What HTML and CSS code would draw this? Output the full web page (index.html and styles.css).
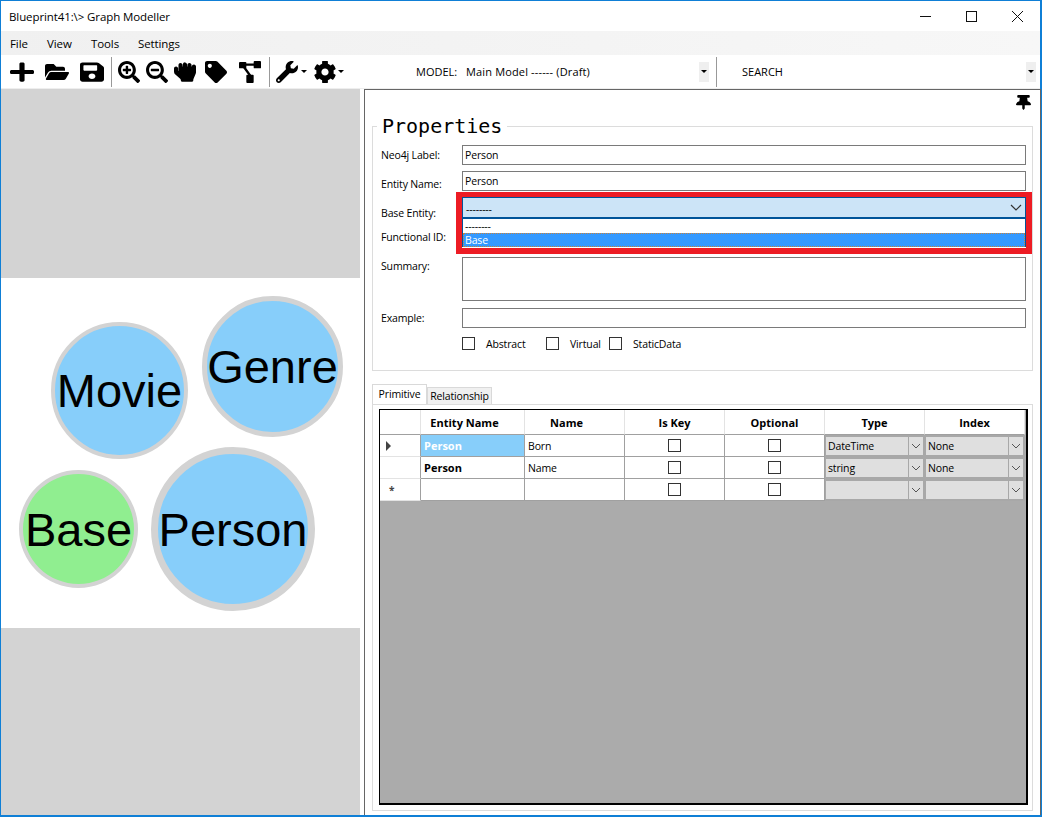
FILE: index.html
```html
<!DOCTYPE html>
<html lang="en">
<head>
<meta charset="utf-8">
<title>Blueprint41 Graph Modeller</title>
<link rel="stylesheet" href="styles.css">
</head>
<body>
<div class="window">
  <header class="titlebar">
    <span class="title">Blueprint41:\&gt; Graph Modeller</span>
    <div class="winctl">
      <svg class="winbtn" viewBox="0 0 46 30"><path d="M18 15.5h11" stroke="#111" fill="none"/></svg>
      <svg class="winbtn" viewBox="0 0 46 30"><rect x="18.5" y="10.5" width="10" height="10" stroke="#111" fill="none"/></svg>
      <svg class="winbtn" viewBox="0 0 46 30"><path d="M18 10l11 11M29 10L18 21" stroke="#111" fill="none"/></svg>
    </div>
  </header>
  <nav class="menubar">
    <span class="menu-file">File</span><span class="menu-view">View</span><span class="menu-tools">Tools</span><span>Settings</span>
  </nav>
  <div class="toolbar">
    <div class="tools">
      <svg class="ico" viewBox="0 0 448 512" preserveAspectRatio="none"><path d="M416 208H272V64c0-17.67-14.33-32-32-32h-32c-17.67 0-32 14.33-32 32v144H32c-17.67 0-32 14.33-32 32v32c0 17.67 14.33 32 32 32h144v144c0 17.67 14.33 32 32 32h32c17.67 0 32-14.33 32-32V304h144c17.67 0 32-14.33 32-32v-32c0-17.67-14.33-32-32-32z"/></svg>
      <svg class="ico" viewBox="0 0 576 512"><path d="M572.694 292.093L500.27 416.248A63.997 63.997 0 0 1 444.989 448H45.025c-18.523 0-30.064-20.093-20.731-36.093l72.424-124.155A64 64 0 0 1 152 256h399.964c18.523 0 30.064 20.093 20.73 36.093zM152 224h328v-48c0-26.51-21.49-48-48-48H272l-64-64H48C21.49 64 0 85.49 0 112v278.046l69.077-118.418C86.214 242.25 117.989 224 152 224z"/></svg>
      <svg class="ico" viewBox="0 0 448 512" preserveAspectRatio="none"><path d="M433.941 129.941l-83.882-83.882A48 48 0 0 0 316.118 32H48C21.49 32 0 53.49 0 80v352c0 26.51 21.49 48 48 48h352c26.51 0 48-21.49 48-48V163.882a48 48 0 0 0-14.059-33.941zM224 416c-35.346 0-64-28.654-64-64 0-35.346 28.654-64 64-64s64 28.654 64 64c0 35.346-28.654 64-64 64zm96-304.52V212c0 6.627-5.373 12-12 12H76c-6.627 0-12-5.373-12-12V108c0-6.627 5.373-12 12-12h228.52c3.183 0 6.235 1.264 8.485 3.515l3.48 3.48A11.996 11.996 0 0 1 320 111.48z"/></svg>
      <span class="sep"></span>
      <svg class="ico" viewBox="0 0 512 512"><path d="M304 192v32c0 6.6-5.4 12-12 12h-56v56c0 6.6-5.4 12-12 12h-32c-6.6 0-12-5.4-12-12v-56h-56c-6.6 0-12-5.4-12-12v-32c0-6.6 5.4-12 12-12h56v-56c0-6.6 5.4-12 12-12h32c6.6 0 12 5.4 12 12v56h56c6.6 0 12 5.4 12 12zm201 284.7L476.7 505c-9.4 9.4-24.6 9.4-33.9 0L343 405.3c-4.5-4.5-7-10.6-7-17V372c-35.3 27.6-79.7 44-128 44C93.1 416 0 322.9 0 208S93.1 0 208 0s208 93.1 208 208c0 48.3-16.4 92.7-44 128h16.3c6.4 0 12.5 2.5 17 7l99.7 99.7c9.3 9.4 9.3 24.6 0 34zM344 208c0-75.2-60.8-136-136-136S72 132.8 72 208s60.8 136 136 136 136-60.8 136-136z"/></svg>
      <svg class="ico" viewBox="0 0 512 512"><path d="M304 192v32c0 6.6-5.4 12-12 12H124c-6.6 0-12-5.4-12-12v-32c0-6.6 5.4-12 12-12h168c6.6 0 12 5.4 12 12zm201 284.7L476.7 505c-9.4 9.4-24.6 9.4-33.9 0L343 405.3c-4.5-4.5-7-10.6-7-17V372c-35.3 27.6-79.7 44-128 44C93.1 416 0 322.9 0 208S93.1 0 208 0s208 93.1 208 208c0 48.3-16.4 92.7-44 128h16.3c6.4 0 12.5 2.5 17 7l99.7 99.7c9.3 9.4 9.3 24.6 0 34zM344 208c0-75.2-60.8-136-136-136S72 132.8 72 208s60.8 136 136 136 136-60.8 136-136z"/></svg>
      <svg class="ico" viewBox="0 0 512 512"><path d="M464.8 80c-26.9-.4-48.8 21.2-48.8 48h-8V96.8c0-26.3-20.9-48.3-47.2-48.8-26.9-.4-48.8 21.2-48.8 48v32h-8V80.8c0-26.3-20.9-48.3-47.2-48.8-26.9-.4-48.8 21.2-48.8 48v48h-8V96.8c0-26.3-20.9-48.3-47.2-48.8-26.9-.4-48.8 21.2-48.8 48v136l-8-7.1v-48.1c0-26.3-20.9-48.3-47.2-48.8C21.9 127.6 0 149.2 0 176v66.4c0 27.4 11.7 53.5 32.2 71.8l111.7 99.3c10.2 9.1 16.1 22.2 16.1 35.9v6.6c0 13.3 10.7 24 24 24h240c13.3 0 24-10.7 24-24v-2.9c0-12.8 2.6-25.5 7.5-37.3l49-116.3c5-11.8 7.5-24.5 7.5-37.3V128.8c0-26.3-20.9-48.4-47.2-48.8z"/></svg>
      <svg class="ico" viewBox="0 0 512 512"><path d="M0 252.118V48C0 21.49 21.49 0 48 0h204.118a48 48 0 0 1 33.941 14.059l211.882 211.882c18.745 18.745 18.745 49.137 0 67.882L293.823 497.941c-18.745 18.745-49.137 18.745-67.882 0L14.059 286.059A48 48 0 0 1 0 252.118zM112 64c-26.51 0-48 21.49-48 48s21.49 48 48 48 48-21.49 48-48-21.49-48-48-48z"/></svg>
      <svg class="ico" viewBox="0 0 24 24"><path d="M6 4h14M5 6l8 11" stroke="#000" stroke-width="2.6" fill="none"/><rect x="0" y="1" width="8" height="7" rx="1"/><rect x="16" y="0" width="8" height="8" rx="1"/><rect x="8" y="15" width="8" height="9" rx="1"/></svg>
      <span class="sep"></span>
      <svg class="ico" viewBox="0 0 512 512"><path d="M507.73 109.1c-2.24-9.03-13.54-12.09-20.12-5.51l-74.36 74.36-67.88-11.31-11.31-67.88 74.36-74.36c6.62-6.62 3.43-17.9-5.66-20.16-47.38-11.74-99.55.91-136.58 37.93-39.64 39.64-50.55 97.1-34.05 147.2L18.74 402.76c-24.99 24.99-24.99 65.51 0 90.5 24.99 24.99 65.51 24.99 90.5 0l213.21-213.21c50.12 16.71 107.47 5.68 147.37-34.22 37.07-37.07 49.7-89.32 37.91-136.73zM64 472c-13.25 0-24-10.75-24-24 0-13.26 10.75-24 24-24s24 10.74 24 24c0 13.25-10.75 24-24 24z"/></svg>
      <span class="caret"></span>
      <svg class="ico" viewBox="18 12 476 488"><path d="M487.4 315.7l-42.6-24.6c4.3-23.2 4.3-47 0-70.2l42.6-24.6c4.9-2.8 7.1-8.6 5.5-14-11.1-35.6-30-67.8-54.7-94.6-3.8-4.1-10-5.1-14.8-2.3L380.8 110c-17.9-15.4-38.5-27.3-60.8-35.1V25.8c0-5.6-3.9-10.5-9.4-11.7-36.7-8.2-74.3-7.8-109.2 0-5.5 1.2-9.4 6.1-9.4 11.7V75c-22.2 7.9-42.8 19.8-60.8 35.1L88.7 85.5c-4.9-2.8-11-1.9-14.8 2.3-24.7 26.7-43.6 58.9-54.7 94.6-1.7 5.4.6 11.2 5.5 14L67.3 221c-4.3 23.2-4.3 47 0 70.2l-42.6 24.6c-4.9 2.8-7.1 8.6-5.5 14 11.1 35.6 30 67.8 54.7 94.6 3.8 4.1 10 5.1 14.8 2.3l42.6-24.6c17.9 15.4 38.5 27.3 60.8 35.1v49.2c0 5.6 3.9 10.5 9.4 11.7 36.7 8.2 74.3 7.8 109.2 0 5.5-1.2 9.4-6.1 9.4-11.7v-49.2c22.2-7.9 42.8-19.8 60.8-35.1l42.6 24.6c4.9 2.8 11 1.9 14.8-2.3 24.7-26.7 43.6-58.9 54.7-94.6 1.5-5.5-.7-11.3-5.6-14.1zM256 336c-44.1 0-80-35.9-80-80s35.9-80 80-80 80 35.9 80 80-35.9 80-80 80z"/></svg>
      <span class="caret"></span>
    </div>
    <div class="model">
      <span class="model-label">MODEL:</span>
      <span class="model-value">Main Model ------ (Draft)</span>
      <span class="tb-arrow"><span class="caret"></span></span>
    </div>
    <span class="sep sep-model"></span>
    <div class="search">
      <span class="search-label">SEARCH</span>
      <span class="tb-arrow"><span class="caret"></span></span>
    </div>
  </div>
  <main class="main">
    <section class="canvas">
      <div class="band band-top"></div>
      <div class="stage">
        <div class="node node-movie">Movie</div>
        <div class="node node-genre">Genre</div>
        <div class="node node-base">Base</div>
        <div class="node node-person">Person</div>
      </div>
      <div class="band"></div>
    </section>
    <section class="panel">
      <div class="pinrow">
        <svg class="pin" viewBox="0 0 384 512" preserveAspectRatio="none"><path d="M298.028 214.267L285.793 96H328c13.255 0 24-10.745 24-24V24c0-13.255-10.745-24-24-24H56C42.745 0 32 10.745 32 24v48c0 13.255 10.745 24 24 24h42.207L85.972 214.267C37.465 236.82 0 277.261 0 328c0 13.255 10.745 24 24 24h136v104.007c0 1.242.289 2.467.845 3.578l24 48c2.941 5.882 11.364 5.893 14.311 0l24-48a8.008 8.008 0 0 0 .845-3.578V352h136c13.255 0 24-10.745 24-24-.001-51.183-37.983-91.42-85.973-113.733z"/></svg>
      </div>
      <fieldset class="props">
        <legend>Properties</legend>
        <div class="form">
          <label class="lbl lbl-2">Neo4j Label:</label>
          <input class="field" value="Person">
          <label class="lbl lbl-5">Entity Name:</label>
          <input class="field" value="Person">
          <label class="lbl lbl-8">Base Entity:</label>
          <div class="combo">
            <div class="combo-head">
              <span class="combo-val">--------</span>
              <svg class="chev" viewBox="0 0 12 7"><path d="M1 1l5 5 5-5" stroke="#333" stroke-width="1.2" fill="none"/></svg>
            </div>
            <div class="combo-list">
              <div class="combo-item">--------</div>
              <div class="combo-item combo-sel">Base</div>
            </div>
            <div class="redbox"></div>
          </div>
          <label class="lbl lbl-5">Functional ID:</label>
          <input class="field" value="">
          <label class="lbl lbl-1">Summary:</label>
          <textarea class="field area"></textarea>
          <label class="lbl lbl-3">Example:</label>
          <input class="field field-ex" value="">
        </div>
        <div class="flags">
          <input type="checkbox" class="chk"><span class="flag flag-abstract">Abstract</span>
          <input type="checkbox" class="chk"><span class="flag flag-virtual">Virtual</span>
          <input type="checkbox" class="chk"><span class="flag flag-static">StaticData</span>
        </div>
      </fieldset>
      <div class="tabs">
        <span class="tab tab-on">Primitive</span>
        <span class="tab">Relationship</span>
      </div>
      <div class="tabpanel">
        <div class="gridbox">
          <table class="grid">
            <colgroup><col class="c-head"><col class="c-ent"><col class="c-std"><col class="c-std"><col class="c-std"><col class="c-std"><col class="c-std"></colgroup>
            <thead>
              <tr>
                <th></th>
                <th class="pad-r">Entity Name</th>
                <th class="pad-r">Name</th>
                <th>Is Key</th>
                <th>Optional</th>
                <th>Type</th>
                <th>Index</th>
              </tr>
            </thead>
            <tbody>
              <tr>
                <td class="rh"><span class="tri"></span></td>
                <td class="ent sel">Person</td>
                <td>Born</td>
                <td class="mid"><input type="checkbox" class="chk"></td>
                <td class="mid"><input type="checkbox" class="chk"></td>
                <td class="cc"><div class="cellcombo"><span class="cc-text">DateTime</span><span class="cc-arrow"><svg class="chev-sm" viewBox="0 0 10 6"><path d="M1 1l4 4 4-4" stroke="#555" fill="none"/></svg></span></div></td>
                <td class="cc"><div class="cellcombo"><span class="cc-text">None</span><span class="cc-arrow"><svg class="chev-sm" viewBox="0 0 10 6"><path d="M1 1l4 4 4-4" stroke="#555" fill="none"/></svg></span></div></td>
              </tr>
              <tr>
                <td class="rh"></td>
                <td class="ent">Person</td>
                <td>Name</td>
                <td class="mid"><input type="checkbox" class="chk"></td>
                <td class="mid"><input type="checkbox" class="chk"></td>
                <td class="cc"><div class="cellcombo"><span class="cc-text">string</span><span class="cc-arrow"><svg class="chev-sm" viewBox="0 0 10 6"><path d="M1 1l4 4 4-4" stroke="#555" fill="none"/></svg></span></div></td>
                <td class="cc"><div class="cellcombo"><span class="cc-text">None</span><span class="cc-arrow"><svg class="chev-sm" viewBox="0 0 10 6"><path d="M1 1l4 4 4-4" stroke="#555" fill="none"/></svg></span></div></td>
              </tr>
              <tr>
                <td class="rh star">*</td>
                <td></td>
                <td></td>
                <td class="mid"><input type="checkbox" class="chk"></td>
                <td class="mid"><input type="checkbox" class="chk"></td>
                <td class="cc"><div class="cellcombo"><span class="cc-text"></span><span class="cc-arrow"><svg class="chev-sm" viewBox="0 0 10 6"><path d="M1 1l4 4 4-4" stroke="#555" fill="none"/></svg></span></div></td>
                <td class="cc"><div class="cellcombo"><span class="cc-text"></span><span class="cc-arrow"><svg class="chev-sm" viewBox="0 0 10 6"><path d="M1 1l4 4 4-4" stroke="#555" fill="none"/></svg></span></div></td>
              </tr>
            </tbody>
          </table>
        </div>
      </div>
    </section>
  </main>
</div>
</body>
</html>
```
FILE: styles.css
```css
* { box-sizing: border-box; }
html, body { margin: 0; padding: 0; }
body {
  width: 1042px;
  height: 817px;
  overflow: hidden;
  font-family: "Open Sans", "Noto Sans", sans-serif;
  font-size: 10.5px;
  letter-spacing: -0.15px;
  color: #000;
  background: #fff;
}
.window {
  width: 1042px;
  height: 817px;
  border: 1px solid #0f7fd6;
  border-right-width: 2px;
  border-bottom-width: 2px;
  display: flex;
  flex-direction: column;
  background: #fff;
}
.titlebar {
  height: 30px;
  flex: none;
  display: flex;
  align-items: center;
  justify-content: space-between;
  padding-left: 8px;
}
.title { font-size: 11.5px; letter-spacing: -0.1px; }
.winctl { display: flex; }
.winbtn { width: 46px; height: 30px; display: block; }
.menubar {
  height: 24px;
  flex: none;
  display: flex;
  align-items: center;
  padding-left: 9px;
  background: linear-gradient(90deg, #f0f0f0, #f7f7f7);
  font-size: 11.5px;
  letter-spacing: -0.1px;
}
.menu-file { width: 37px; }
.menu-view { width: 44px; }
.menu-tools { width: 47px; }
.toolbar {
  height: 34px;
  flex: none;
  display: flex;
  align-items: center;
  padding-left: 9px;
  border-bottom: 1px solid #eee;
  font-size: 11px;
  letter-spacing: 0;
}
.tools {
  display: grid;
  grid-template-columns: 35px 35px 31px 6px 28px 28px 31px 34px 31px 6px 26px 12px 25px 6px;
  align-items: center;
}
.ico { width: 24px; height: 22px; display: block; }
.sep { width: 1px; height: 30px; background: #999; display: block; }
.caret {
  width: 0;
  height: 0;
  border-left: 3px solid transparent;
  border-right: 3px solid transparent;
  border-top: 3px solid #000;
  display: block;
}
.model {
  display: flex;
  align-items: center;
  margin-left: 72px;
  width: 293px;
}
.model-label { width: 50px; }
.model-value { flex: 1; letter-spacing: 0.15px; }
.tb-arrow {
  width: 10px;
  height: 20px;
  background: #efefef;
  display: flex;
  align-items: center;
  justify-content: center;
}
.sep-model { margin-left: 7px; }
.search {
  display: flex;
  align-items: center;
  flex: 1;
  padding-left: 25px;
  padding-right: 4px;
}
.search-label { flex: 1; }
.main { flex: 1; display: flex; min-height: 0; }
.canvas {
  width: 359px;
  flex: none;
  display: flex;
  flex-direction: column;
}
.band { flex: 1; background: #d3d3d3; }
.band-top { flex: none; height: 189px; }
.stage { height: 350px; flex: none; position: relative; background: #fff; }
.node {
  position: absolute;
  border-radius: 50%;
  border-style: solid;
  border-color: #d3d3d3;
  background: #87cefa;
  display: flex;
  align-items: center;
  justify-content: center;
  font-family: "Liberation Sans", Arial, sans-serif;
  font-size: 47px;
  letter-spacing: 0;
  color: #000;
}
.node-movie { left: 50px; top: 44px; width: 137px; height: 137px; border-width: 4px; }
.node-genre { left: 201px; top: 18px; width: 141px; height: 141px; border-width: 5px; }
.node-base { left: 18px; top: 192px; width: 119px; height: 118px; border-width: 4px; background: #90ee90; }
.node-person { left: 150px; top: 169px; width: 164px; height: 164px; border-width: 7px; }
.panel {
  width: 677px;
  margin-left: 4px;
  flex: none;
  border: 1px solid #666;
  border-bottom: 0;
  display: flex;
  flex-direction: column;
  padding: 0 7px 4px 7px;
}
.pinrow {
  height: 25px;
  flex: none;
  display: flex;
  justify-content: flex-end;
  padding-top: 5px;
  margin-right: 2px;
}
.pin { width: 15px; height: 15px; display: block; }
.props {
  margin: 0;
  padding: 7px 6px 0 8px;
  height: 256px;
  flex: none;
  border: 1px solid #dcdcdc;
  min-width: 0;
}
.props legend {
  margin-left: -4px;
  padding: 0 5px;
  font-family: "DejaVu Sans Mono", monospace;
  font-size: 20px;
  letter-spacing: 0;
  line-height: 23px;
}
.form {
  display: grid;
  grid-template-columns: 81px 1fr;
  grid-template-rows: 20px 20px 21px 27px 44px 20px;
  row-gap: 6px;
}
.lbl { line-height: 16px; }
.lbl-1 { padding-top: 1px; }
.lbl-2 { padding-top: 2px; }
.lbl-3 { padding-top: 3px; }
.lbl-5 { padding-top: 5px; }
.lbl-8 { padding-top: 8px; }
.field {
  display: block;
  width: 100%;
  height: 20px;
  border: 1px solid #7a7a7a;
  background: #fff;
  padding: 0 2px;
  margin: 0;
  font: inherit;
  letter-spacing: inherit;
  outline: 0;
  resize: none;
}
.area { height: 44px; }
.field-ex { margin-top: 1px; }
.combo { position: relative; height: 21px; }
.combo-head {
  height: 22px;
  background: #cce4f7;
  border: 1px solid #005499;
  border-bottom-width: 2px;
  display: flex;
  align-items: center;
  justify-content: space-between;
  padding: 0 3px;
}
.combo-val { padding-top: 2px; }
.chev { width: 12px; height: 7px; display: block; }
.combo-list {
  position: absolute;
  left: 0;
  right: 0;
  top: 22px;
  height: 28px;
  background: #fff;
  border: 1px solid #005499;
  border-top: 0;
  z-index: 2;
}
.combo-item { height: 14px; line-height: 15px; padding-left: 2px; }
.combo-sel { background: #3399ff; color: #fff; outline: 1px dotted #c9823a; outline-offset: -1px; }
.redbox {
  position: absolute;
  left: -6px;
  right: -6px;
  top: -5px;
  height: 62px;
  border: 6px solid #ed1c24;
  border-top-width: 5px;
  z-index: 3;
  pointer-events: none;
}
.flags {
  display: flex;
  align-items: center;
  margin-top: 9px;
  padding-left: 81px;
}
.chk {
  appearance: none;
  -webkit-appearance: none;
  width: 13px;
  height: 13px;
  margin: 0;
  border: 1px solid #333;
  background: #fff;
  display: block;
  flex: none;
}
.flag { padding-top: 1px; }
.flag-abstract { margin-left: 11px; width: 60px; }
.flag-virtual { margin-left: 11px; width: 39px; }
.flag-static { margin-left: 11px; }
.tabs {
  display: flex;
  align-items: flex-end;
  margin-top: 13px;
  height: 20px;
  flex: none;
}
.tab {
  height: 17px;
  width: 65px;
  border: 1px solid #d9d9d9;
  border-bottom: 0;
  background: #f0f0f0;
  text-align: center;
  line-height: 17px;
}
.tab-on {
  height: 20px;
  width: 55px;
  background: #fff;
  line-height: 18px;
}
.tabpanel {
  flex: 1;
  min-height: 0;
  border: 1px solid #dcdcdc;
  padding: 4px 4px 5px 6px;
  display: flex;
}
.gridbox {
  flex: 1;
  background: #ababab;
  border: 1px solid #000;
  border-bottom-width: 2px;
  border-right-width: 2px;
}
.grid {
  border-collapse: separate;
  border-spacing: 0;
  table-layout: fixed;
  width: 645px;
}
.c-head { width: 41px; }
.c-ent { width: 104px; }
.c-std { width: 100px; }
.grid th {
  height: 25px;
  background: #fff;
  border-right: 1px solid #e3e3e3;
  border-bottom: 1px solid #a0a0a0;
  font-size: 11px;
  letter-spacing: 0;
  font-weight: 700;
  padding: 0;
}
.grid th.pad-r { padding-right: 16px; }
.grid td {
  height: 22px;
  padding: 0 0 0 3px;
  background: #fff;
  border-right: 1px solid #a0a0a0;
  border-bottom: 1px solid #a0a0a0;
  white-space: nowrap;
}
.grid td.rh {
  padding: 0;
  border-bottom: 1px solid #e3e3e3;
}
.tri {
  display: block;
  margin-left: 6px;
  width: 0;
  height: 0;
  border-top: 5px solid transparent;
  border-bottom: 5px solid transparent;
  border-left: 5px solid #444;
}
.grid td.star { padding-left: 9px; font-weight: 700; color: #444; font-size: 10px; }
.grid td.ent { font-weight: 700; font-size: 11px; letter-spacing: 0; }
.grid td.sel { background: #87cefa; color: #fff; }
.grid td.mid { padding: 0; }
.mid .chk { margin: 0 auto; }
.grid td.cc { padding: 0; border-right: 0; border-bottom: 0; background: #a8a8a8; }
.cellcombo {
  height: 22px;
  width: 100%;
  display: flex;
  border: 2px solid #a8a8a8;
  border-left-width: 1px;
  background: #dfdfdf;
}
.cc-text { flex: 1; padding-left: 2px; line-height: 18px; }
.cc-arrow {
  width: 15px;
  flex: none;
  border-left: 1px solid #a8a8a8;
  display: flex;
  align-items: center;
  justify-content: center;
}
.chev-sm { width: 10px; height: 6px; display: block; }
```
